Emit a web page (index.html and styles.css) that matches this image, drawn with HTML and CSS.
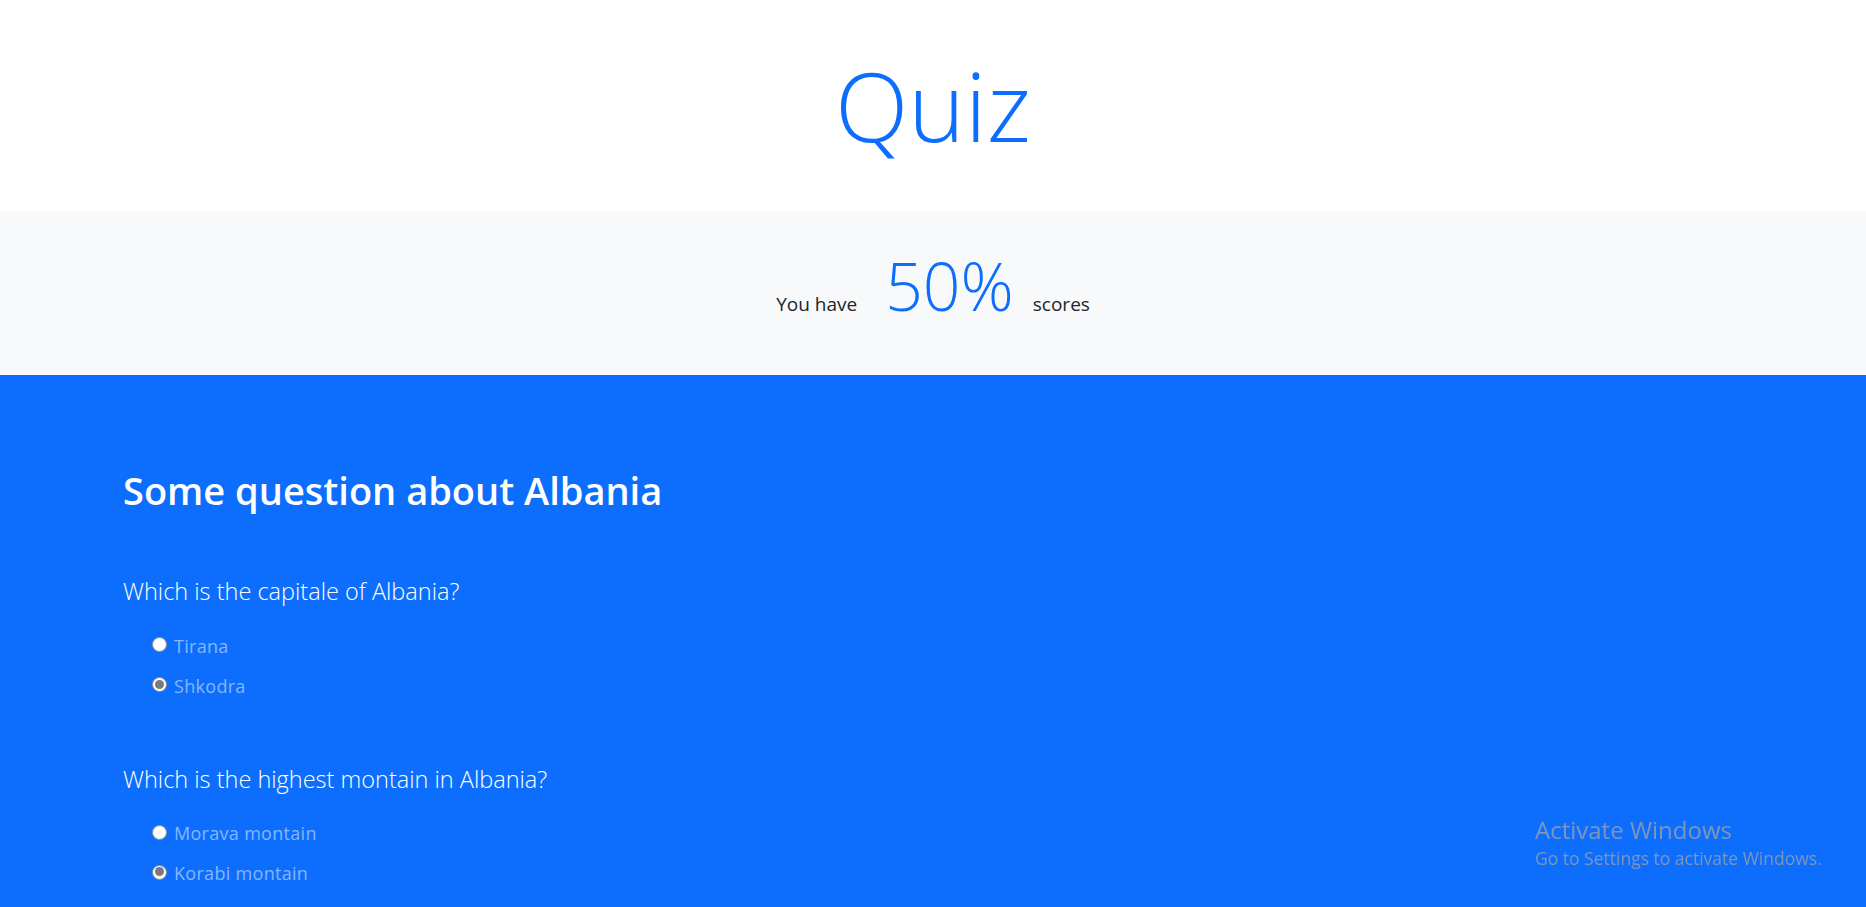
FILE: index.html
```html
<!DOCTYPE html>
<html lang="en">
<head>
<meta charset="utf-8">
<title>Quiz</title>
<link rel="stylesheet" href="styles.css">
</head>
<body>
  <header class="hero">
    <h1 class="hero-title">Quiz</h1>
  </header>
  <section class="score">
    <span class="score-label">You have</span>
    <span class="score-value">50%</span>
    <span class="score-label">scores</span>
  </section>
  <main class="quiz">
    <div class="container">
      <h2 class="quiz-title">Some question about Albania</h2>
      <div class="question">
        <p class="question-text">Which is the capitale of Albania?</p>
        <ul class="options">
          <li class="option"><span class="radio"></span><span class="option-label">Tirana</span></li>
          <li class="option"><span class="radio radio-checked"></span><span class="option-label">Shkodra</span></li>
        </ul>
      </div>
      <div class="question">
        <p class="question-text">Which is the highest montain in Albania?</p>
        <ul class="options">
          <li class="option"><span class="radio"></span><span class="option-label">Morava montain</span></li>
          <li class="option"><span class="radio radio-checked"></span><span class="option-label">Korabi montain</span></li>
        </ul>
      </div>
    </div>
  </main>
  <div class="watermark">
    <div class="watermark-title">Activate Windows</div>
    <div class="watermark-sub">Go to Settings to activate Windows.</div>
  </div>
</body>
</html>
```
FILE: styles.css
```css
* { box-sizing: border-box; }
html, body {
  margin: 0;
  padding: 0;
}
body {
  font-family: "Open Sans", "Noto Sans", "Liberation Sans", sans-serif;
  color: #212529;
  background: #0d6efd;
  min-height: 907px;
  overflow: hidden;
}
.hero {
  background: #fff;
  padding: 45px 0 46px;
  text-align: center;
}
.hero-title {
  margin: 0;
  font-size: 96px;
  font-weight: 300;
  line-height: 120px;
  color: #0d6efd;
}
.score {
  background: #f8f9fa;
  height: 164px;
  padding-top: 32px;
  display: flex;
  justify-content: center;
  align-items: baseline;
}
.score-label {
  font-size: 19px;
  line-height: 30px;
  color: #212529;
}
.score-value {
  font-size: 66px;
  font-weight: 300;
  line-height: 84px;
  color: #0d6efd;
  margin: 0 19px 0 28px;
}
.quiz {
  background: #0d6efd;
  color: #fff;
}
.container {
  padding: 91px 0 0 123px;
}
.quiz-title {
  margin: 0 0 59px;
  font-size: 38px;
  font-weight: 600;
  line-height: 48px;
  color: #fff;
}
.question {
  margin-bottom: 55px;
}
.question-text {
  margin: 0;
  font-size: 23.5px;
  font-weight: 300;
  line-height: 37.5px;
  color: #fff;
}
.options {
  list-style: none;
  margin: 15px 0 0;
  padding: 0 0 0 29px;
}
.option {
  display: flex;
  align-items: center;
  height: 40px;
}
.radio {
  width: 15px;
  height: 15px;
  border-radius: 50%;
  background: #fff;
  border: 1px solid #8d8d8d;
  margin-right: 7px;
  margin-top: -2px;
  position: relative;
  flex: none;
}
.radio-checked {
  background: #fff;
  border: 1.5px solid #8a8a8a;
}
.radio-checked::after {
  content: "";
  position: absolute;
  left: 1.75px;
  top: 1.75px;
  width: 9px;
  height: 9px;
  border-radius: 50%;
  background: #7a7a7a;
}
.option-label {
  font-size: 18px;
  letter-spacing: 0.3px;
  line-height: 24px;
  color: #86b6fe;
}
.watermark {
  position: fixed;
  left: 1535px;
  top: 815px;
  color: #7f95ba;
}
.watermark-title {
  font-size: 24px;
  line-height: 30px;
}
.watermark-sub {
  font-size: 17.5px;
  line-height: 26px;
}
```
